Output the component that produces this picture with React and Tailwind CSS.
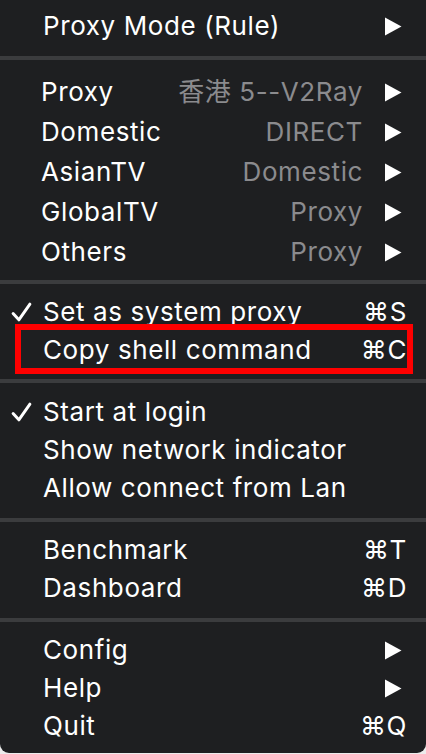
import React from 'react';

const FONT = { fontFamily: 'Inter, "Noto Sans CJK SC", sans-serif' };

// 子菜单箭头
const Arrow = () => (
    <svg width="18" height="19" viewBox="0 0 18 19" className="shrink-0">
        <path d="M1 0.5 L17.5 9.5 L1 18.5 Z" fill="#ffffff" />
    </svg>
);

const Check = () => (
    <svg width="21" height="21" viewBox="0 0 20 20" className="shrink-0">
        <path d="M2 11 L7.5 17 L18 2" fill="none" stroke="#ffffff" strokeWidth="2.8" strokeLinecap="round" strokeLinejoin="round" />
    </svg>
);

const Separator = ({ top, bottom }) => (
    <div style={{ marginTop: top, marginBottom: bottom }} className="h-[4px] bg-[#3b3c3e]" />
);

const Item = ({ label, checked, shortcut, submenu, children }) => (
    <div className="relative h-[38px] flex items-center pr-[19px]">
        <div className="w-[43px] pl-[11px] flex items-center">{checked && <Check />}</div>
        <span className="flex-1 text-white">{label}</span>
        {shortcut && <span className="text-white" style={{ fontFamily: 'Inter, "DejaVu Sans", sans-serif' }}>{shortcut}</span>}
        {submenu && <span className="mr-[5px]"><Arrow /></span>}
        {children}
    </div>
);

const ProxyRow = ({ label, value }) => (
    <div className="h-[40px] flex items-center pl-[41px] pr-[24px]">
        <span className="flex-1 text-white">{label}</span>
        <span className="text-[#8b8b8e] mr-[21px]">{value}</span>
        <Arrow />
    </div>
);

const App = () => {
    return (
        <div className="w-[426px] h-[754px] bg-[#ececec]" style={FONT}>
            <div className="h-[753px] bg-[#1e1f21] rounded-b-[9px] pt-[7px] text-[26px] leading-none tracking-[0.6px]">
                <Item label="Proxy Mode (Rule)" submenu />
                <Separator top={11} bottom={12} />

                <ProxyRow label="Proxy" value="香港 5--V2Ray" />
                <ProxyRow label="Domestic" value="DIRECT" />
                <ProxyRow label="AsianTV" value="Domestic" />
                <ProxyRow label="GlobalTV" value="Proxy" />
                <ProxyRow label="Others" value="Proxy" />
                <Separator top={8} bottom={9} />

                <Item label="Set as system proxy" checked shortcut="⌘S" />
                <Item label="Copy shell command" shortcut="⌘C">
                    <div className="absolute left-[15px] right-[13px] top-[-7px] bottom-[-5px] border-[6px] border-[#ff0000]" />
                </Item>
                <Separator top={10} bottom={10} />

                <Item label="Start at login" checked />
                <Item label="Show network indicator" />
                <Item label="Allow connect from Lan" />
                <Separator top={11} bottom={9} />

                <Item label="Benchmark" shortcut="⌘T" />
                <Item label="Dashboard" shortcut="⌘D" />
                <Separator top={11} bottom={9} />

                <Item label="Config" submenu />
                <Item label="Help" submenu />
                <Item label="Quit" shortcut="⌘Q" />
            </div>
        </div>
    );
};

export default App;
